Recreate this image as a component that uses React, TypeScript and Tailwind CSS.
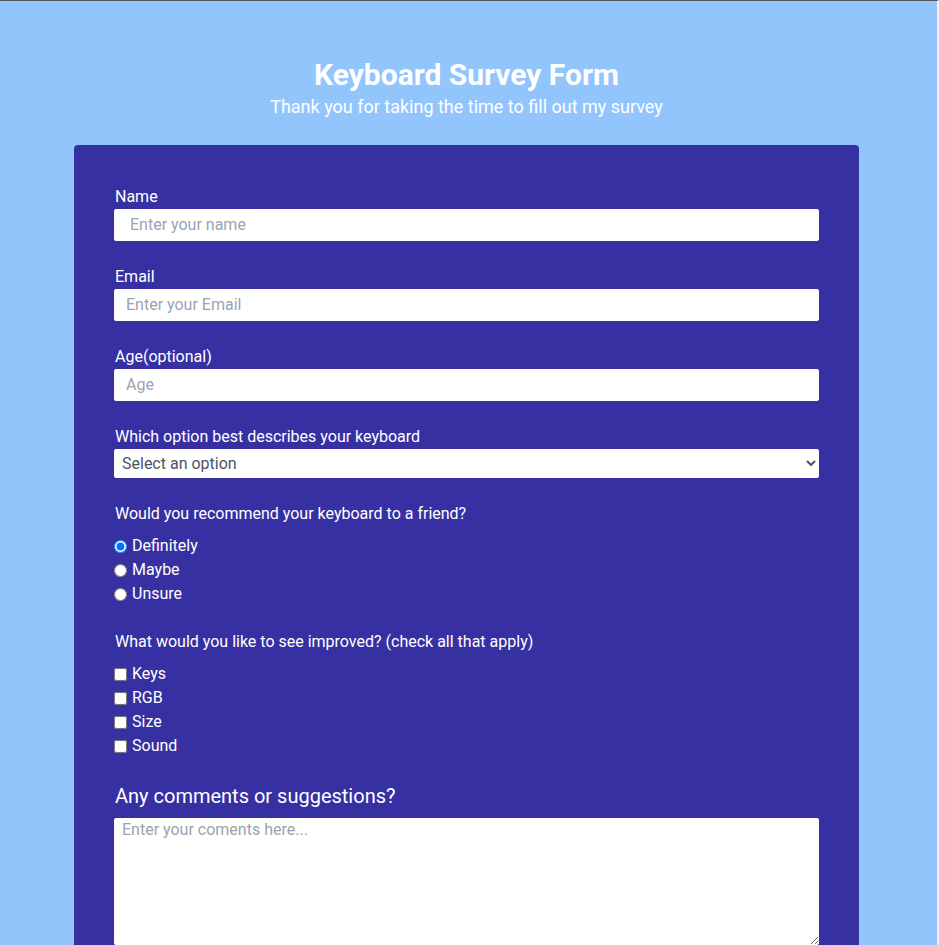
import React from "react";

export default function App() {
  const font = { fontFamily: "Roboto, 'Noto Sans', sans-serif" };
  return (
    <div
      className="min-h-screen w-full bg-[#93c5fd] border-t border-t-[#555555] border-r-2 border-r-[#f1f1f1] text-white"
      style={font}
    >
      <div className="w-[933px] flex flex-col items-center">
        <h1 className="mt-[56px] text-[30px] leading-[36px] font-bold text-white">
          Keyboard Survey Form
        </h1>
        <p className="mt-[3px] text-[18px] leading-[22px] text-white">
          Thank you for taking the time to fill out my survey
        </p>
        <form className="mt-[27px] w-[785px] bg-[#3730a3] rounded-[4px] pt-[42px] px-[40px] pb-[40px] flex flex-col">
          <label className="block pl-[1px] text-[16px] leading-5">Name</label>
          <input
            className="mt-[2px] h-[32px] w-full bg-white rounded-[2px] pl-[16px] pb-[2px] text-[16px] text-[#374151] placeholder:text-[#9ca3af] outline-none"
            placeholder="Enter your name"
          />
          <label className="mt-[26px] block pl-[1px] text-[16px] leading-5">Email</label>
          <input
            className="mt-[2px] h-[32px] w-full bg-white rounded-[2px] pl-[12px] pb-[2px] text-[16px] text-[#374151] placeholder:text-[#9ca3af] outline-none"
            placeholder="Enter your Email"
          />
          <label className="mt-[26px] block pl-[1px] text-[16px] leading-5">Age(optional)</label>
          <input
            className="mt-[2px] h-[32px] w-full bg-white rounded-[2px] pl-[12px] pb-[2px] text-[16px] text-[#374151] placeholder:text-[#9ca3af] outline-none"
            placeholder="Age"
          />
          <label className="mt-[26px] block pl-[1px] text-[16px] leading-5">
            Which option best describes your keyboard
          </label>
          <select
            className="mt-[2px] h-[29px] w-full bg-white rounded-[2px] pl-[4px] pr-[2px] text-[16px] text-[#4b5563] outline-none"
            defaultValue=""
          >
            <option value="" disabled>
              Select an option
            </option>
            <option value="mech">Mechanical</option>
            <option value="mem">Membrane</option>
          </select>

          <p className="mt-[26px] pl-[1px] text-[16px] leading-5">Would you recommend your keyboard to a friend?</p>
          <div className="mt-[10px] flex flex-col">
            {["Definitely", "Maybe", "Unsure"].map((o, i) => (
              <label key={o} className="flex items-center gap-[5px] h-[24px] text-[16px]">
                <input type="radio" name="rec" defaultChecked={i === 0} className="m-0 w-[13px] h-[13px]" />
                <span>{o}</span>
              </label>
            ))}
          </div>

          <p className="mt-[26px] pl-[1px] text-[16px] leading-5">
            What would you like to see improved? (check all that apply)
          </p>
          <div className="mt-[10px] flex flex-col">
            {["Keys", "RGB", "Size", "Sound"].map((o) => (
              <label key={o} className="flex items-center gap-[5px] h-[24px] text-[16px]">
                <input type="checkbox" className="m-0 w-[13px] h-[13px]" />
                <span>{o}</span>
              </label>
            ))}
          </div>

          <h2 className="mt-[26px] pl-[1px] text-[20px] leading-6">Any comments or suggestions?</h2>
          <textarea
            className="mt-[10px] h-[127px] w-full bg-white rounded-[2px] px-[8px] pt-0 text-[16px] text-[#374151] placeholder:text-[#9ca3af] outline-none"
            placeholder="Enter your coments here..."
          />
        </form>
      </div>
    </div>
  );
}
